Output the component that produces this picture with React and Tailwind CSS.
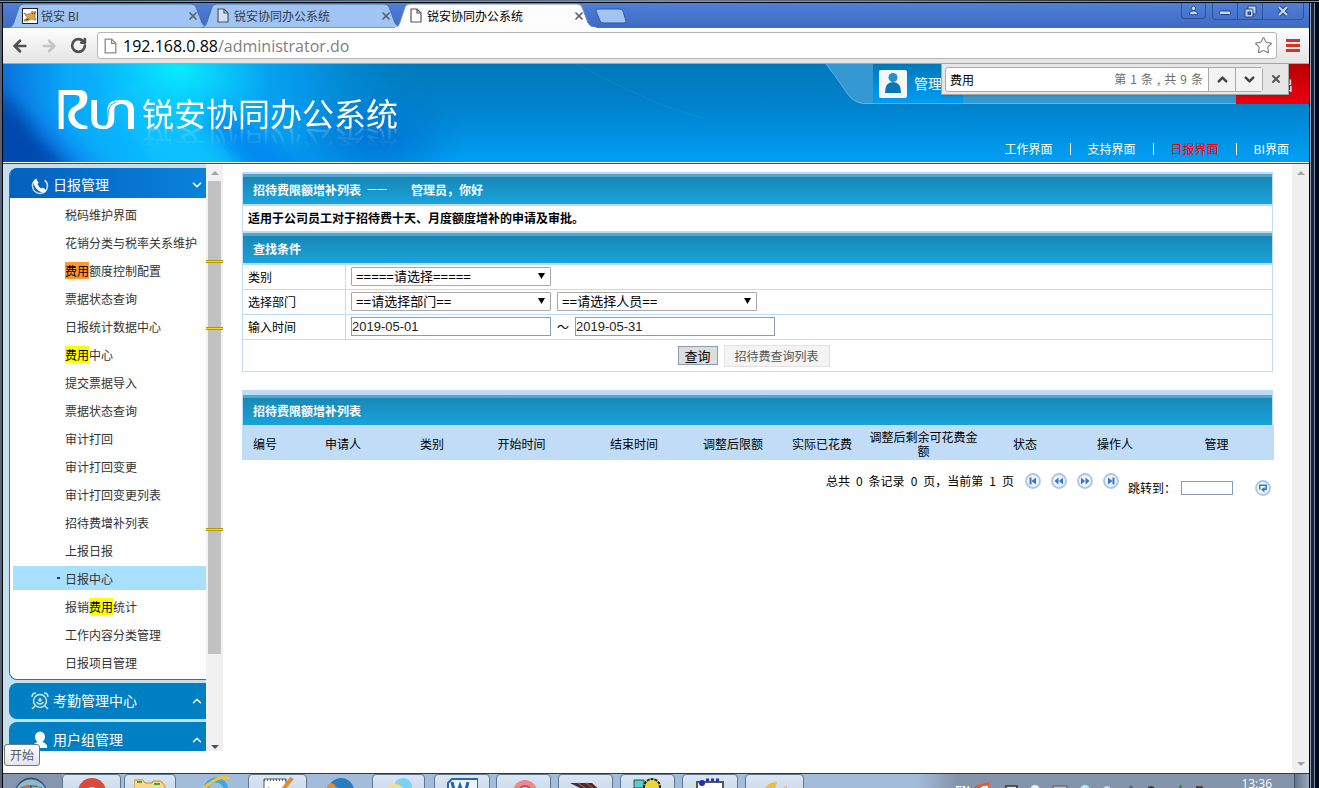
import React from 'react';
import { ChevronDown, ChevronUp, Star, X, ArrowLeft, ArrowRight, RotateCw } from 'lucide-react';

const MENU = [
  ['税码维护界面'],
  ['花销分类与税率关系维护'],
  ['', '费用', '额度控制配置', 'bg-[#ff9632]'],
  ['票据状态查询'],
  ['日报统计数据中心'],
  ['', '费用', '中心', 'bg-[#ffff00]'],
  ['提交票据导入'],
  ['票据状态查询'],
  ['审计打回'],
  ['审计打回变更'],
  ['审计打回变更列表'],
  ['招待费增补列表'],
  ['上报日报'],
  ['日报中心'],
  ['报销', '费用', '统计', 'bg-[#ffff00]'],
  ['工作内容分类管理'],
  ['日报项目管理'],
];

const COLUMNS = [
  ['编号', 'w-[44px]'],
  ['申请人', 'w-[112px]'],
  ['类别', 'w-[66px]'],
  ['开始时间', 'w-[113px]'],
  ['结束时间', 'w-[112px]'],
  ['调整后限额', 'w-[86px]'],
  ['实际已花费', 'w-[92px]'],
  ['调整后剩余可花费金额', 'w-[111px]'],
  ['状态', 'w-[92px]'],
  ['操作人', 'w-[88px]'],
  ['管理', 'w-[115px]'],
];

function PageIcon({ className }) {
  return (
    <svg viewBox="0 0 12 15" className={className} aria-hidden="true">
      <path d="M1 1h6l4 4v9H1z" fill="#fff" fillOpacity="0.5" stroke="currentColor" strokeWidth="1.2" />
      <path d="M7 1v4h4" fill="none" stroke="currentColor" strokeWidth="1.2" />
    </svg>
  );
}

function CatIcon() {
  return (
    <svg viewBox="0 0 16 16" className="size-4" aria-hidden="true">
      <rect x="0.5" y="0.5" width="15" height="15" fill="#fff" stroke="#222" />
      <path d="M2 5l2 1 3 0 2-1 1-2 1 1h2l0-1 1 2-1 2 0 2 1 3h-2l-2-1-3 1-2 1H2l1-2 3-1-2-2z" fill="#d9a441" stroke="#6b5220" strokeWidth="0.5" />
      <path d="M10.500 5v1M12.500 5v1M4 12l3-1" stroke="#332" strokeWidth="0.8" />
    </svg>
  );
}

function BrowserTab({ title, active, icon, first }) {
  return (
    <div className={`relative h-[25px] w-[203px] shrink-0 ${first ? '' : '-ml-[10px]'} ${active ? 'z-10' : ''}`}>
      <svg viewBox="0 0 203 25" preserveAspectRatio="none" className="absolute inset-0 size-full" aria-hidden="true">
        <path
          d="M0 25C4 24 5 22 6 19L11 4Q12 1 16 1H183Q187 1 188 4L194 20Q196 24 203 25Z"
          fill={active ? '#fdfdfd' : '#a0c4f3'}
          stroke={active ? '#6f8fc4' : '#4a6fae'}
        />
        {active ? <path d="M1 25H202" stroke="#fdfdfd" strokeWidth="2" /> : null}
      </svg>
      <div className="relative flex h-full items-center pl-[14px] pr-[12px]">
        {icon === 'cat' ? <CatIcon /> : <PageIcon className="ml-[2px] h-[15px] w-[12px] text-[#555]" />}
        <span className={`flex-1 text-[12px] leading-4 ${icon === 'cat' ? 'ml-[3px]' : 'ml-[5px]'} ${active ? 'text-black' : 'text-[#333c4d]'}`}>{title}</span>
        <button type="button" aria-label="关闭标签页" className="text-[#5d6470]">
          <X className="size-3" strokeWidth={3.5} />
        </button>
      </div>
    </div>
  );
}

function WindowButtons() {
  const cell = 'flex h-4 items-center justify-center text-[#d5e3fb]';
  return (
    <div className="mr-[5px] flex h-[17px] gap-[6px]">
      <button type="button" aria-label="用户" className={`${cell} w-[25px] rounded-b border border-t-0 border-[#2f509b]`}>
        <svg viewBox="0 0 12 12" className="size-[11px]"><circle cx="6" cy="3.6" r="2.4" fill="#c4d7f6" stroke="#26407e" /><path d="M1.5 10.5q0-4 4.500-4t4.500 4z" fill="#c4d7f6" stroke="#26407e" /></svg>
      </button>
      <div className="flex rounded-b border border-t-0 border-[#2f509b]">
        <button type="button" aria-label="最小化" className={`${cell} w-[25px] border-r border-[#2f509b]`}>
          <svg viewBox="0 0 12 12" className="size-3"><rect x="0.5" y="6" width="11" height="3.500" rx="1" fill="#c4d7f6" stroke="#26407e" /></svg>
        </button>
        <button type="button" aria-label="还原" className={`${cell} w-[25px] border-r border-[#2f509b]`}>
          <svg viewBox="0 0 13 13" className="size-[13px]"><rect x="4" y="1" width="8" height="8" rx="1" fill="#c4d7f6" stroke="#26407e" /><rect x="1" y="4" width="8" height="8" rx="1" fill="#c4d7f6" stroke="#26407e" /><rect x="4" y="7" width="2.500" height="2.500" fill="#4673cc" stroke="#26407e" /></svg>
        </button>
        <button type="button" aria-label="关闭" className={`${cell} w-[40px]`}>
          <svg viewBox="0 0 12 12" className="size-3"><path d="M2 2l8 8M10 2l-8 8" stroke="#26407e" strokeWidth="4" /><path d="M2 2l8 8M10 2l-8 8" stroke="#c4d7f6" strokeWidth="2.200" /></svg>
        </button>
      </div>
    </div>
  );
}

function Chrome() {
  return (
    <>
      <div className="flex h-[25px] items-start bg-gradient-to-b from-[#4f7fd6] to-[#3f6ac4]">
        <div className="flex flex-1 items-start pl-[5px]">
          <BrowserTab first icon="cat" title="锐安 BI" />
          <BrowserTab title="锐安协同办公系统" />
          <BrowserTab active title="锐安协同办公系统" />
          <button type="button" aria-label="新标签页" className="-ml-[2px] mt-[5px]">
            <svg viewBox="0 0 32 16" className="h-4 w-8"><path d="M1 3Q0 1 3 1H24Q27 1 28 3L31 13Q32 15 29 15H9Q6 15 5 13Z" fill="#a0c4f3" stroke="#2f559f" /></svg>
          </button>
        </div>
        <WindowButtons />
      </div>
      <div className="flex h-[36px] items-center border-b border-[#a8a8a8] bg-gradient-to-b from-[#fdfdfd] to-[#e4e4e4] pl-2 pr-[9px] text-[#505050]">
        <button type="button" aria-label="后退"><ArrowLeft className="size-[18px]" strokeWidth={3.6} /></button>
        <button type="button" aria-label="前进" className="ml-[11px] text-[#c4c4c4]"><ArrowRight className="size-[18px]" strokeWidth={3.4} /></button>
        <button type="button" aria-label="刷新" className="ml-[12px]"><RotateCw className="size-[17px]" strokeWidth={3.8} /></button>
        <div className="ml-[10px] flex h-[27px] flex-1 items-center rounded-[3px] border border-[#b5b5b5] bg-white pl-[6px] pr-[3px]">
          <PageIcon className="h-4 w-[13px] text-[#8a8a8a]" />
          <a href="#address" className="ml-[6px] flex-1 font-['Open_Sans',sans-serif] text-[16px] leading-5 text-[#808080]">
            <span className="text-black">192.168.0.88</span>/administrator.do
          </a>
          <button type="button" aria-label="收藏"><Star className="size-[19px] text-[#888]" strokeWidth={1.5} /></button>
        </div>
        <button type="button" aria-label="菜单" className="ml-[9px] flex w-[14px] flex-col gap-[2px]">
          <span className="h-[3px] bg-[#d9302a]" /><span className="h-[3px] bg-[#d9302a]" /><span className="h-[3px] bg-[#d9302a]" />
        </button>
      </div>
    </>
  );
}

function HeaderBackdrop() {
  return (
    <svg viewBox="0 0 1306 98" preserveAspectRatio="none" className="absolute inset-0 size-full" aria-hidden="true">
      <defs>
        <linearGradient id="base" x1="0" y1="0" x2="0" y2="1">
          <stop offset="0" stopColor="#0078bb" /><stop offset="0.45" stopColor="#0083cc" /><stop offset="1" stopColor="#009ff5" />
        </linearGradient>
        <linearGradient id="left" x1="0" y1="0" x2="1" y2="0">
          <stop offset="0" stopColor="#0872dd" /><stop offset="0.15" stopColor="#0aa9fa" /><stop offset="0.4" stopColor="#0bbcff" /><stop offset="0.68" stopColor="#069cf0" stopOpacity="0.85" /><stop offset="1" stopColor="#0078bb" stopOpacity="0" />
        </linearGradient>
        <radialGradient id="glow"><stop offset="0" stopColor="#08ecff" /><stop offset="1" stopColor="#0ad0ff" stopOpacity="0" /></radialGradient>
        <radialGradient id="deep"><stop offset="0" stopColor="#006cd2" stopOpacity="0.7" /><stop offset="1" stopColor="#0070d4" stopOpacity="0" /></radialGradient>
        <filter id="soft" x="-30%" y="-30%" width="160%" height="160%"><feGaussianBlur stdDeviation="9" /></filter>
      </defs>
      <rect width="1306" height="98" fill="url(#base)" />
      <rect width="440" height="98" fill="url(#left)" />
      <path d="M-20 20L10 40L80 110H-20Z" fill="#0348ae" filter="url(#soft)" />
      <path d="M40 50L110 110H70L25 60Z" fill="#0878ec" opacity="0.5" filter="url(#soft)" />
      <path d="M215 40L320 110H245L190 60Z" fill="#0080ec" opacity="0.7" filter="url(#soft)" />
      <path d="M95 30L170 10L240 110H160Z" fill="#08c4fe" opacity="0.7" filter="url(#soft)" />
      <ellipse cx="175" cy="5" rx="95" ry="60" fill="url(#glow)" transform="rotate(12 175 5)" />
      <ellipse cx="375" cy="75" rx="90" ry="50" fill="url(#deep)" />
      <path d="M573 0C620 24 660 44 700 54" fill="none" stroke="#35a5df" strokeOpacity="0.25" />
    </svg>
  );
}

function Logo() {
  return (
    <div className="flex items-start pl-[55px] pt-[24px]">
      <svg viewBox="0 0 228 120" className="mt-[2px] h-10 w-[76px]" role="img" aria-label="RUN">
        <g fill="#fff">
          <path d="M2 0H62C80 0 88 8 88 24C88 42 78 52 66 58C54 64 48 70 50 80C53 96 68 106 88 107V117H72C48 116 33 98 31 80C30 62 40 54 52 47C62 41 66 34 65 26C64 18 60 15 52 15H17V117H2Z" />
          <path d="M100 30H117V88C117 101 122 107 134 107C146 107 148 99 148 88V62C148 40 160 30 184 30H196C216 30 228 40 228 60V117H210V64C210 49 204 43 192 42C176 42 169 48 169 62V86C169 106 158 117 136 117C113 117 100 108 100 86Z" />
        </g>
        <path d="M141 108Q151 98 150 76Q150 44 174 36" fill="none" stroke="#12aaf8" strokeWidth="3" />
      </svg>
      <h1 className="ml-2 text-[32px] font-normal leading-[48px] text-white [-webkit-box-reflect:below_-17px_linear-gradient(to_top,rgba(0,0,0,0.3),transparent_60%)]">锐安协同办公系统</h1>
    </div>
  );
}

function FindBar() {
  return (
    <form className="absolute right-[20px] top-0 z-20 flex h-[31px] w-[348px] items-center border border-t-0 border-[#a5a5a5] bg-[#e6e6e6] pl-[3px] pr-[6px] shadow-sm">
      <div className="flex h-[25px] flex-1 items-center rounded-[3px] border border-[#aaa] bg-white">
        <input aria-label="查找" defaultValue="费用" className="h-full min-w-0 flex-1 bg-transparent pl-1 text-[12px] text-black outline-none" />
        <span className="mr-[5px] flex gap-[4px] text-[12px] text-[#6c6c6c]">
          <span>第</span><span>1</span><span>条</span><span>,</span><span>共</span><span>9</span><span>条</span>
        </span>
        <button type="button" aria-label="上一个" className="flex h-full w-[27px] items-center justify-center border-l border-[#aaa] bg-[#f3f3f3] text-[#444]"><ChevronUp className="size-[15px]" strokeWidth={4} /></button>
        <button type="button" aria-label="下一个" className="flex h-full w-[27px] items-center justify-center border-l border-[#aaa] bg-[#f3f3f3] text-[#444]"><ChevronDown className="size-[15px]" strokeWidth={4} /></button>
      </div>
      <button type="button" aria-label="关闭查找" className="ml-[7px] text-[#555]"><X className="size-3" strokeWidth={4} /></button>
    </form>
  );
}

function Header() {
  const sep = <span className="h-3 w-px bg-white" />;
  return (
    <header className="relative flex h-[100px] shrink-0 justify-between border-b border-[#0a5d94]">
      <div className="absolute inset-x-0 bottom-0 h-px bg-white" />
      <div className="absolute inset-x-0 bottom-px top-0"><HeaderBackdrop /></div>
      <div className="relative"><Logo /></div>
      <div className="relative flex w-[486px] flex-col">
        <div className="flex h-10">
          <svg viewBox="0 0 50 40" className="h-10 w-[50px] shrink-0" aria-hidden="true">
            <path d="M3 0H50V39.500H42C30 39 26 32 22 26Q12 11 3 0Z" fill="#3499d2" />
            <path d="M3 0Q12 11 22 26C26 32 30 39 42 39.500H50" fill="none" stroke="#62b6e2" />
          </svg>
          <div className="flex h-10 w-[90px] shrink-0 items-center gap-[7px] border-b border-[#4fb4ec] bg-gradient-to-b from-[#0079ba] to-[#009df2] pl-[6px] text-[14px] text-white">
            <svg viewBox="0 0 28 28" className="size-7 shrink-0" aria-hidden="true">
              <rect width="28" height="28" rx="2" fill="#f4f6f7" />
              <circle cx="14" cy="7.500" r="4.500" fill="#2390cc" />
              <path d="M6 23Q6 12 14 12T22 23Z" fill="#0875b5" />
            </svg>
            <span className="whitespace-nowrap">管理员</span>
          </div>
          <div className="flex-1 border-b border-[#62b6e2] bg-[#3499d2]" />
          <a href="#logout" className="flex w-[73px] items-center justify-end bg-gradient-to-b from-[#b80000] to-[#ec0010] pr-[16px] text-[14px] text-white">退出</a>
        </div>
        <nav className="mt-auto flex items-center justify-end gap-[17px] pb-[5px] pr-5 text-[12px] leading-[18px] text-white">
          <a href="#work">工作界面</a>{sep}
          <a href="#support">支持界面</a>{sep}
          <a href="#daily" className="text-[#ff0000]">日报界面</a>{sep}
          <a href="#bi">BI界面</a>
        </nav>
      </div>
      <FindBar />
    </header>
  );
}

function Sidebar() {
  return (
    <aside className="mb-[22px] flex w-[220px] shrink-0 overflow-hidden">
      <div className="flex w-[203px] flex-col gap-[3px] bg-[#c4dfee] pl-[6px] pt-1">
        <section className="shrink-0 rounded-l-lg border border-r-0 border-[#0a7dba] bg-white pb-[2px]">
          <button type="button" className="relative -mt-px flex h-[30px] w-full items-center overflow-hidden rounded-tl-lg bg-gradient-to-r from-[#0560bd] to-[#0a82dc] pl-[21px] pr-[2px] text-[14px] text-white">
            <svg viewBox="0 0 18 18" className="mt-[6px] size-[18px]" aria-hidden="true">
              <circle cx="9" cy="9" r="7.500" fill="none" stroke="#c5e2f7" strokeDasharray="32 8" strokeWidth="1.500" />
              <path d="M4.500 2L7.500 5Q8 6 6.500 7Q7.500 10 10.500 11.500L12 10.500L15.500 13.500Q14 16.500 11 15.500Q3 12.500 2.500 5Q3 3 4.500 2Z" fill="#fff" />
            </svg>
            <span className="ml-1 flex-1 pt-[2px] text-left">日报管理</span>
            <ChevronDown className="mt-1 size-[14px]" strokeWidth={3} />
          </button>
          <ul className="ml-[3px] pb-[3px] pt-[4px] text-[12px] text-[#333]">
            {MENU.map(([before, mark, after, color], i) => (
              <li key={i} className={`my-[4px] h-6 first:mt-0 last:mb-0 ${i === 13 ? 'bg-[#aae0ff]' : ''}`}>
                <a href={`#item-${i}`} className="flex h-6 items-center whitespace-nowrap pt-[2px]">
                  <span className="flex w-[52px] justify-end pr-[5px]">{i === 13 ? <i className="mb-[3px] h-[2px] w-[3px] bg-[#06457c]" /> : null}</span>
                  <span className="leading-4">
                    {before}
                    {mark ? <mark className={`${color} text-black`}>{mark}</mark> : null}
                    {after}
                  </span>
                </a>
              </li>
            ))}
          </ul>
        </section>
        <button type="button" className="flex h-9 shrink-0 items-center rounded-l-lg bg-[#0080c2] pl-[22px] pr-[2px] text-[14px] text-white">
          <svg viewBox="0 0 18 18" className="size-[18px]" fill="none" stroke="#d3ebf8" strokeWidth="1.400" aria-hidden="true">
            <circle cx="9" cy="9" r="6.500" /><circle cx="9" cy="8" r="1" fill="#fff" /><path d="M5.500 10Q9 14 12.500 10M1 5Q1 1 5 1M17 5Q17 1 13 1M4 14L1 17M14 14L17 17" />
          </svg>
          <span className="ml-1 flex-1 pb-[2px] text-left">考勤管理中心</span>
          <ChevronUp className="size-[14px]" strokeWidth={2.5} />
        </button>
        <button type="button" className="flex h-9 shrink-0 items-center rounded-l-lg bg-[#0080c2] pl-[22px] pr-[2px] text-[14px] text-white">
          <svg viewBox="0 0 18 18" className="size-[18px]" fill="#fff" aria-hidden="true"><ellipse cx="9" cy="6" rx="5" ry="5.500" /><path d="M2 17Q1 13 6 11H12Q17 13 16 17Z" /></svg>
          <span className="ml-1 flex-1 pb-[2px] text-left">用户组管理</span>
          <ChevronUp className="size-[14px]" strokeWidth={2.5} />
        </button>
      </div>
      <div className="relative flex w-[17px] flex-col items-center bg-[#f1f1f1]">
        <div className="flex h-[17px] shrink-0 items-center"><svg viewBox="0 0 8 4" className="h-1 w-2"><path d="M0 4L4 0L8 4Z" fill="#a3a3a3" /></svg></div>
        <div className="w-[13px] grow-[473] bg-[#c1c1c1]" />
        <div className="grow-[80]" />
        <div className="flex h-[17px] shrink-0 items-center pt-2"><svg viewBox="0 0 8 4" className="h-1 w-2"><path d="M0 0L4 4L8 0Z" fill="#505050" /></svg></div>
        <i className="absolute inset-x-0 top-[96px] h-[3px] border-y border-[#b39800] bg-[#ffde00]" />
        <i className="absolute inset-x-0 top-[163px] h-[3px] border-y border-[#b39800] bg-[#ffde00]" />
        <i className="absolute inset-x-0 top-[364px] h-[3px] border-y border-[#b39800] bg-[#ffde00]" />
      </div>
    </aside>
  );
}

function Bar({ children }) {
  return (
    <h2 className="flex h-[30px] items-center border-t-[3px] border-[#54a5c9] bg-gradient-to-b from-[#1888b5] to-[#18a3dc] px-[10px] pb-[2px] text-[12px] font-bold text-white">
      {children}
    </h2>
  );
}

function Picker({ label, text, id }) {
  return (
    <span className="relative inline-flex w-[200px]">
      <select id={id} aria-label={label} className="h-[19px] w-full appearance-none rounded-[1px] border border-[#a9a9a9] bg-white pl-1 font-['Liberation_Sans','Noto_Sans_CJK_SC',sans-serif] text-[13px] leading-4 text-black">
        <option>{text}</option>
      </select>
      <svg viewBox="0 0 7 6" className="pointer-events-none absolute right-[6px] top-[6px] h-[6px] w-[7px]"><path d="M0 0H7L3.500 6Z" fill="#000" /></svg>
    </span>
  );
}

function Row({ label, htmlFor, children }) {
  return (
    <div className="flex h-[25px] border-b border-[#bfdcf6]">
      <label htmlFor={htmlFor} className="flex w-[103px] shrink-0 items-center border-r border-[#bfdcf6] pl-[5px] text-[12px]">{label}</label>
      <div className="flex items-center pb-px pl-[5px]">{children}</div>
    </div>
  );
}

function Pager({ label, children }) {
  return (
    <button type="button" aria-label={label} className="size-4">
      <svg viewBox="0 0 16 16" className="size-4">
        <circle cx="8" cy="8" r="7" fill="#f0f5fc" stroke="#a9c6ea" strokeWidth="1.800" />
        <g fill="#3b76c6">{children}</g>
      </svg>
    </button>
  );
}

function Content() {
  const box = "h-[19px] w-[200px] border border-[#8a9bb3] bg-white font-['Liberation_Sans',sans-serif] text-[13px] text-[#222]";
  return (
    <main className="min-w-0 flex-1 overflow-hidden bg-white pl-[19px] pr-[19px] pt-2 text-[12px] text-black">
      <section className="border border-t-2 border-[#bfdcf6]">
        <Bar>
          <span>招待费限额增补列表</span>
          <span className="ml-[6px] text-[10px] font-normal">一一</span>
          <span className="ml-[24px]">管理员，你好</span>
        </Bar>
        <p className="flex h-[27px] items-center border-t-2 border-[#bfdcf6] px-[5px] pb-[2px] font-bold">适用于公司员工对于招待费十天、月度额度增补的申请及审批。</p>
        <div className="border-y-2 border-[#bfdcf6]"><Bar>查找条件</Bar></div>
        <form>
          <Row label="类别" htmlFor="kind"><Picker id="kind" text="=====请选择=====" /></Row>
          <Row label="选择部门" htmlFor="dept">
            <span className="flex gap-[6px]"><Picker id="dept" text="==请选择部门==" /><Picker label="选择人员" text="==请选择人员==" /></span>
          </Row>
          <Row label="输入时间" htmlFor="from">
            <input id="from" defaultValue="2019-05-01" className={box} />
            <span className="w-6 text-center text-[12px]">～</span>
            <input aria-label="结束时间" defaultValue="2019-05-31" className={box} />
          </Row>
          <div className="flex h-[31px] items-center justify-center gap-[6px] pr-[8px]">
            <button type="button" className="h-[19px] w-10 border border-[#8a9bb3] bg-[#dddddd] text-[13px] leading-[16px]">查询</button>
            <button type="button" className="h-[22px] w-[106px] border border-[#e2e2e2] bg-[#f4f4f4] text-[12px] leading-5 text-[#555]">招待费查询列表</button>
          </div>
        </form>
      </section>
      <section className="mt-[18px] border border-b-0 border-t-[5px] border-[#bfdcf6]">
        <Bar>招待费限额增补列表</Bar>
        <table className="w-full table-fixed bg-[#c1dcf7]">
          <thead>
            <tr className="h-[35px]">
              {COLUMNS.map(([name, width]) => (
                <th key={name} scope="col" className={`${width} p-0 pt-[2px] text-center align-middle font-normal leading-[14px]`}>{name}</th>
              ))}
            </tr>
          </thead>
        </table>
      </section>
      <div className="mt-[13px] flex items-start justify-end pr-[2px]">
        <span className="flex gap-[6px] leading-4"><span>总共</span><span>0</span><span>条记录</span><span>0</span><span>页，当前第</span><span>1</span><span>页</span></span>
        <span className="ml-[11px] flex gap-[10px]">
          <Pager label="首页"><path d="M4.500 4.500h2v7h-2zM11 4.500v7L6.500 8z" /></Pager>
          <Pager label="上一页"><path d="M7.500 4.500v7L3.500 8zM12 4.500v7L8 8z" /></Pager>
          <Pager label="下一页"><path d="M4 4.500v7L8 8zM8.500 4.500v7l4-3.500z" /></Pager>
          <Pager label="末页"><path d="M5 4.500v7L9.500 8zM9.500 4.500h2v7h-2z" /></Pager>
        </span>
        <span className="mt-[7px] flex items-center">
          <label htmlFor="jump" className="ml-[9px] w-[53px] leading-4">跳转到：</label>
          <input id="jump" className="h-[14px] w-[52px] border border-[#8a9bb3] bg-white text-[12px]" />
          <span className="ml-[22px] flex"><Pager label="跳转"><path d="M4 4.500h8V10H9.500v2.500L6 9.500L9.500 7v1.500h1V6h-5v3.500H4z" /></Pager></span>
        </span>
      </div>
    </main>
  );
}

function Arrow({ up }) {
  return <svg viewBox="0 0 8 4" className="h-1 w-2"><path d={up ? 'M0 4L4 0L8 4Z' : 'M0 0L4 4L8 0Z'} fill="#a3a3a3" /></svg>;
}

const glyph = 'mt-[2px] h-[26px] w-8 shrink-0';
const TASKS = [
  ['w-[59px] ml-0', true, <><circle cx="16" cy="15" r="14" fill="#d94a3d" /><circle cx="16" cy="16" r="6" fill="#e9f1fa" /></>],
  ['w-[52px] ml-[3px]', true, <><path d="M0 3h9l2 3h7l1-2h8l4 5v18H0z" fill="#f4d98a" stroke="#b4913c" /><path d="M3 5h5M20 7h6" stroke="#3ca642" strokeWidth="2" /></>],
  ['w-[64px] ml-[8px]', false, <><circle cx="16" cy="14" r="10" fill="none" stroke="#3da7e8" strokeWidth="5" /><path d="M2 14Q20-3 29 3" fill="none" stroke="#f0c339" strokeWidth="3" /></>],
  ['w-[59px] ml-0', true, <><path d="M2 2h22v25H2z" fill="#fff" stroke="#555" /><path d="M2 3h22" stroke="#555" strokeDasharray="1 2" strokeWidth="2" /><path d="M30 1L19 15" stroke="#d89032" strokeWidth="4" /><path d="M6 11l3 3" stroke="#222" strokeWidth="2" /></>],
  ['w-[65px] ml-0', false, <><circle cx="17" cy="15" r="13" fill="#2a7dbd" /><path d="M3 10Q8 4 12 11Q22 14 29 18V26H3z" fill="#ee8a22" /></>],
  ['w-[53px] ml-0', true, <><circle cx="20" cy="10" r="9" fill="#7ad2f5" /><circle cx="12" cy="17" r="10" fill="#f7e07a" /></>],
  ['w-[56px] ml-[9px]', true, <><path d="M6 2h26v24H2V6z" fill="#edf3fb" stroke="#2a64b0" strokeWidth="2" /><path d="M6 5l4 16 4-12 4 12 4-16" fill="none" stroke="#2461b0" strokeWidth="3" /></>],
  ['w-[55px] ml-[6px]', true, <><circle cx="17" cy="15" r="12" fill="#e98a8f" /><circle cx="17" cy="15" r="6" fill="#f6dfe2" stroke="#c94753" strokeWidth="2" /></>],
  ['w-[55px] ml-[7px]', true, <><path d="M0 6h22l10 9v8L16 14z" fill="#4b2a35" /><path d="M8 6l14 10M16 6l12 9" stroke="#b36a37" /></>],
  ['w-[55px] ml-[7px]', true, <><path d="M2 3h10v8H2z" fill="#4ed0d4" stroke="#444" /><circle cx="20" cy="10" r="8" fill="#e5d639" stroke="#222" strokeDasharray="3 1" strokeWidth="2" /></>],
  ['w-[56px] ml-[7px]', true, <><path d="M3 5h26v21H3z" fill="#fff" stroke="#555" strokeWidth="2" /><circle cx="8" cy="6" r="3" fill="#1631c4" /><path d="M12 3h14" stroke="#1631c4" strokeDasharray="3 2" strokeWidth="3" /></>],
  ['w-[59px] ml-[7px]', true, <><path d="M4 22Q4 5 18 5L15 15L28 9V26H4z" fill="#e6bd45" /></>],
];

function Taskbar() {
  return (
    <footer className="flex h-[15px] shrink-0 overflow-hidden border-t border-[#30384a] bg-gradient-to-r from-[#a3bcda] from-70% to-[#8494ab] to-73%">
      <button type="button" aria-label="开始菜单" className="h-10 w-[59px] shrink-0 bg-[#8796af] pl-[11px]">
        <svg viewBox="0 0 34 34" className="size-[34px]"><circle cx="17" cy="17" r="16" fill="#3b6f97" stroke="#23455e" /><path d="M2 13Q17 3 32 13A16 16 0 0 0 2 13" fill="#91b8cc" /><path d="M9 10q4-3 7-1v7H7z" fill="#e56239" /><path d="M18 9q4 2 8 0l-2 8h-6z" fill="#8fc64b" /></svg>
      </button>
      {TASKS.map(([place, raised, art], i) => (
        <button key={i} type="button" aria-label={`任务 ${i + 1}`} className={`${place} flex h-10 shrink-0 justify-center ${raised ? 'rounded-t-sm border border-[#5f7691] bg-gradient-to-b from-[#dbe6f3] to-[#b5cae3]' : ''}`}>
          <svg viewBox="0 0 32 26" className={glyph}>{art}</svg>
        </button>
      ))}
      <div className="ml-auto flex h-6 shrink-0 items-start">
        <span className="mr-[6px] mt-[10px] font-['Liberation_Sans',sans-serif] text-[10px] font-bold leading-[14px] text-white">EN</span>
        <svg viewBox="0 0 230 14" className="mt-[7px] h-[14px] w-[230px]" aria-hidden="true">
          <path d="M0 5L14 1V14H0z" fill="#ee5722" /><path d="M5 9Q7 5 13 6" fill="none" stroke="#fff" strokeWidth="2" />
          <path d="M31 5h11v10H31z" fill="#dfe5ec" stroke="#333" strokeWidth="1.500" /><circle cx="60" cy="9" r="5" fill="#e9eef4" />
          <path d="M78 5h14v10H78z" fill="#c6c0bc" stroke="#555" /><circle cx="110" cy="9" r="5" fill="#b8e6f5" /><circle cx="132" cy="9" r="4" fill="#cfd5de" />
          <path d="M153 8l3-4l3 4z" fill="#53647c" /><circle cx="176" cy="9" r="4" fill="#353d4c" /><path d="M206 4l-4 10" stroke="#268544" strokeWidth="2" /><path d="M222 5v10M222 6h6" stroke="#333" strokeWidth="1.500" />
        </svg>
        <time className="ml-[36px] mr-[22px] mt-[2px] font-['Open_Sans',sans-serif] text-[12px] leading-4 text-white">13:36</time>
      </div>
      <button type="button" aria-label="显示桌面" className="h-10 w-[15px] shrink-0 border-l border-[#404d62] bg-gradient-to-r from-[#64748b] to-[#9caabc]" />
    </footer>
  );
}

export default function App() {
  return (
    <div className="flex h-screen flex-col overflow-hidden bg-[#071226] font-['Noto_Sans_CJK_SC',sans-serif]">
      <div className="flex h-[3px] shrink-0 flex-col bg-gradient-to-r from-[#123042] via-[#67809c] to-[#07121f]"><i className="mt-px h-px bg-[#8293ad]" /><i className="h-px bg-black" /></div>
      <div className="flex min-h-0 flex-1">
        <div className="w-[3px] shrink-0 border-r border-black bg-[#53647c]" />
        <div className="relative flex min-w-0 flex-1 flex-col bg-white">
          <Chrome />
          <Header />
          <div className="flex min-h-0 flex-1">
            <Sidebar />
            <Content />
            <div className="flex w-[17px] shrink-0 flex-col items-center justify-between bg-[#f0f0f0] py-[7px]"><Arrow up /><Arrow /></div>
          </div>
          <Taskbar />
          <div role="tooltip" className="absolute bottom-[22px] left-px rounded-[3px] border border-[#767676] bg-gradient-to-b from-white to-[#e5e5f0] px-[5px] text-[12px] leading-5 text-[#555]">开始</div>
        </div>
        <div className="flex w-[10px] shrink-0 bg-[#030919]"><i className="w-px bg-black" /><i className="w-px bg-[#93a1b3]" /><i className="w-[3px] bg-[#16243c]" /><i className="w-px bg-[#7d8ca3]" /></div>
      </div>
    </div>
  );
}
